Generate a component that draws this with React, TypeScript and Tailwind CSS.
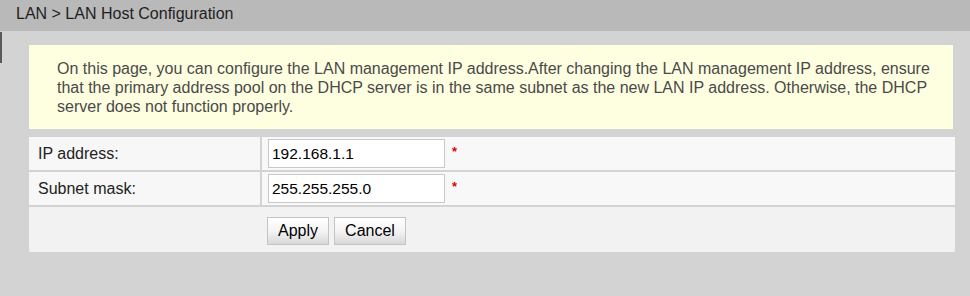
export default function App() {
  return (
    <div className="w-[970px] h-[296px] bg-[#d3d3d3] font-['Liberation_Sans',Arial,sans-serif] relative overflow-hidden">
      <div className="h-[31px] bg-[#b9b9b9] pl-4 pb-[4px] flex items-center text-[16px] text-[#1e1e1e]">
        LAN &gt; LAN Host Configuration
      </div>
      <div className="absolute left-0 top-[32px] w-[2px] h-[31px] bg-[#5a5a5a]" />

      <div className="pl-[29px] pt-[14px]">
        <div className="w-[924px] h-[84px] bg-[#fefee0] pl-[28px] pt-[14px] text-[16px] leading-[19px] text-[#4a4a4a] whitespace-nowrap">
          On this page, you can configure the LAN management IP address.After changing the LAN management IP address, ensure
          <br />
          that the primary address pool on the DHCP server is in the same subnet as the new LAN IP address. Otherwise, the DHCP
          <br />
          server does not function properly.
        </div>

        <div className="mt-[8px] w-[926px] flex flex-col gap-[2px]">
          <Row label="IP address:" value="192.168.1.1" />
          <Row label="Subnet mask:" value="255.255.255.0" />
          <div className="h-[45px] bg-[#f2f2f2] pl-[238px] pt-[10px] flex gap-[5px] items-start">
            <Btn text="Apply" w="w-[62px]" />
            <Btn text="Cancel" w="w-[72px]" />
          </div>
        </div>
      </div>
    </div>
  );
}

function Row({ label, value }: { label: string; value: string }) {
  return (
    <div className="flex h-[33px] gap-[2px]">
      <div className="w-[231px] bg-[#f7f7f7] pl-[9px] flex items-center text-[16px] text-[#222]">{label}</div>
      <div className="flex-1 bg-[#f8f8f8] pl-[6px] flex items-center">
        <div className="w-[177px] h-[29px] bg-white border border-[#c8c8c8] pl-[3px] flex items-center text-[15.5px] text-black">
          {value}
        </div>
        <span className="ml-[7px] text-[#e00000] text-[13px] font-bold -mt-[4px]">*</span>
      </div>
    </div>
  );
}

function Btn({ text, w }: { text: string; w: string }) {
  return (
    <button
      className={`${w} h-[28px] border border-[#c4c4c4] bg-gradient-to-b from-white via-[#f4f4f4] to-[#d8d8d8] text-[16px] text-black flex items-center justify-center`}
    >
      {text}
    </button>
  );
}
